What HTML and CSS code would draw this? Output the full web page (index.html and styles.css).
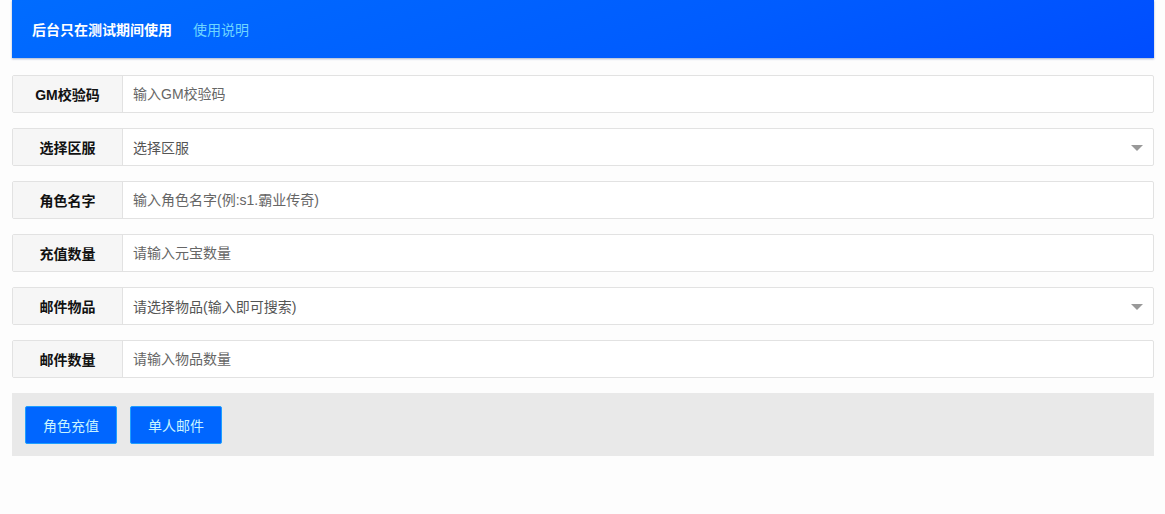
FILE: index.html
```html
<!DOCTYPE html>
<html lang="zh-CN">
<head>
    <meta charset="UTF-8">
    <meta name="viewport" content="width=device-width, initial-scale=1.0">
    <title>GM后台</title>
    <link rel="stylesheet" href="styles.css">
</head>
<body>
    <div class="wrap">
        <div class="notice">
            <span class="notice_title">后台只在测试期间使用</span>
            <a class="notice_link" href="#">使用说明</a>
        </div>
        <div class="form_item">
            <label class="form_label">GM校验码</label>
            <input class="form_input" type="text" placeholder="输入GM校验码">
        </div>
        <div class="form_item">
            <label class="form_label">选择区服</label>
            <div class="form_select">选择区服<i class="select_arrow"></i></div>
        </div>
        <div class="form_item">
            <label class="form_label">角色名字</label>
            <input class="form_input" type="text" placeholder="输入角色名字(例:s1.霸业传奇)">
        </div>
        <div class="form_item">
            <label class="form_label">充值数量</label>
            <input class="form_input" type="text" placeholder="请输入元宝数量">
        </div>
        <div class="form_item">
            <label class="form_label">邮件物品</label>
            <div class="form_select">请选择物品(输入即可搜索)<i class="select_arrow"></i></div>
        </div>
        <div class="form_item">
            <label class="form_label">邮件数量</label>
            <input class="form_input" type="text" placeholder="请输入物品数量">
        </div>
        <div class="btn_bar">
            <button class="btn">角色充值</button>
            <button class="btn">单人邮件</button>
        </div>
    </div>
</body>
</html>
```

FILE: styles.css
```css
body {
    margin: 0;
    background: #fdfdfd;
    font-family: "Liberation Sans", "Noto Sans CJK SC", sans-serif;
    font-size: 14px;
    color: #333;
}

.wrap {
    padding: 0 11px 0 12px;
}

.notice {
    height: 58px;
    display: flex;
    align-items: center;
    padding-left: 20px;
    background: linear-gradient(160deg, #006cff 0%, #005cff 60%, #004dff 100%);
    box-shadow: 0 1px 2px rgba(0, 40, 120, 0.35);
    margin-bottom: 17px;
}

.notice_title {
    color: #fff;
    font-weight: bold;
    font-size: 14px;
}

.notice_link {
    color: #6fd6ff;
    text-decoration: none;
    font-size: 14px;
    margin-left: 21px;
}

.form_item {
    display: flex;
    height: 38px;
    box-sizing: border-box;
    border: 1px solid #e2e2e2;
    border-radius: 2px;
    background: #fff;
    margin-bottom: 15px;
}

.form_label {
    width: 109px;
    flex: none;
    display: flex;
    align-items: center;
    justify-content: center;
    background: #f6f6f6;
    border-right: 1px solid #e2e2e2;
    color: #111;
    font-weight: bold;
    font-size: 14px;
}

.form_input,
.form_select {
    flex: 1;
    border: none;
    outline: none;
    padding: 0 10px;
    font-family: inherit;
    font-size: 14px;
    color: #555;
    background: transparent;
}

.form_input::placeholder {
    color: #666;
}

.form_select {
    display: flex;
    align-items: center;
    color: #555;
    position: relative;
}

.select_arrow {
    position: absolute;
    right: 10px;
    top: 16px;
    border-left: 6px solid transparent;
    border-right: 6px solid transparent;
    border-top: 6px solid #999;
}

.btn_bar {
    background: #e9e9e9;
    height: 63px;
    display: flex;
    align-items: center;
    gap: 13px;
    padding-left: 13px;
}

.btn {
    width: 92px;
    height: 38px;
    border: 1px solid #1e9fff;
    border-radius: 2px;
    background: #0066ff;
    color: #c8f4ff;
    font-family: inherit;
    font-size: 14px;
    cursor: pointer;
}
```
